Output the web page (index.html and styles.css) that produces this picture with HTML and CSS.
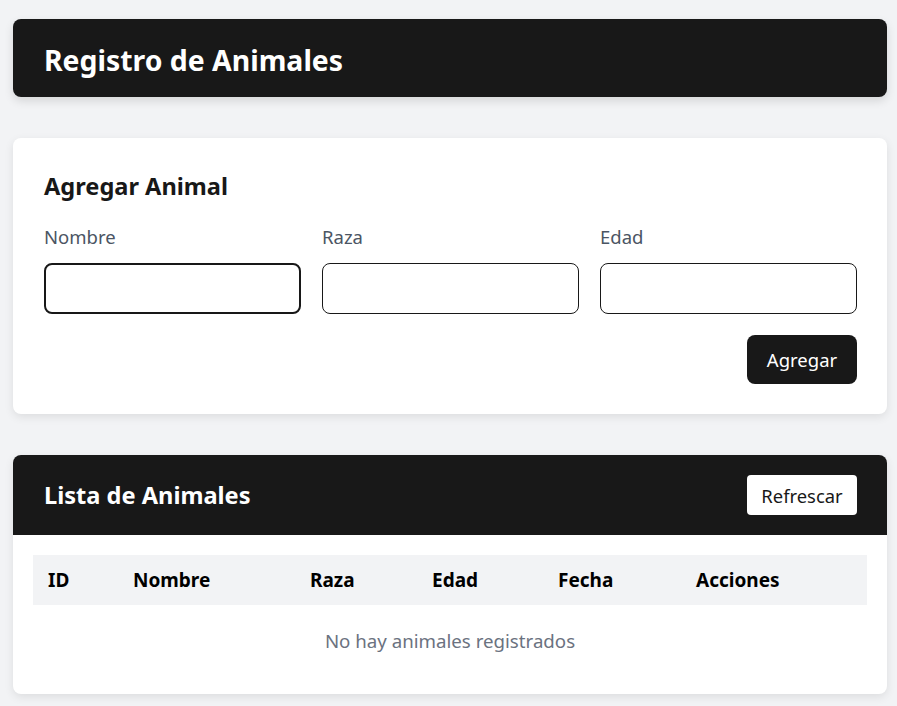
FILE: index.html
```html
<!DOCTYPE html>
<html lang="es">
<head>
<meta charset="utf-8">
<title>Registro de Animales</title>
<link rel="stylesheet" href="styles.css">
</head>
<body>
<div class="page">
  <header class="topbar">
    <h1 class="title">Registro de Animales</h1>
  </header>

  <section class="card form-card">
    <h2 class="card-title">Agregar Animal</h2>
    <div class="fields">
      <label class="field">
        <span class="label">Nombre</span>
        <input class="input input-focus" type="text">
      </label>
      <label class="field">
        <span class="label">Raza</span>
        <input class="input" type="text">
      </label>
      <label class="field">
        <span class="label">Edad</span>
        <input class="input" type="text">
      </label>
    </div>
    <div class="actions">
      <button class="btn-primary" type="button">Agregar</button>
    </div>
  </section>

  <section class="card list-card">
    <div class="list-head">
      <h2 class="card-title light">Lista de Animales</h2>
      <button class="btn-light" type="button">Refrescar</button>
    </div>
    <div class="list-body">
      <table class="table">
        <thead>
          <tr>
            <th class="c-id">ID</th>
            <th class="c-nombre">Nombre</th>
            <th class="c-raza">Raza</th>
            <th class="c-edad">Edad</th>
            <th class="c-fecha">Fecha</th>
            <th class="c-acc">Acciones</th>
          </tr>
        </thead>
        <tbody>
          <tr>
            <td class="empty" colspan="6">No hay animales registrados</td>
          </tr>
        </tbody>
      </table>
    </div>
  </section>
</div>
</body>
</html>
```
FILE: styles.css
```css
* { box-sizing: border-box; }
html, body { margin: 0; padding: 0; }
body {
  background: #f2f3f5;
  font-family: "Segoe UI", "Noto Sans", "Open Sans", sans-serif;
  color: #181818;
}
.page {
  padding: 19px 10px 12px 13px;
  display: flex;
  flex-direction: column;
  gap: 41px;
}
.topbar {
  background: #181818;
  border-radius: 8px;
  height: 78px;
  padding: 4px 31px 0;
  display: flex;
  align-items: center;
  box-shadow: 0 4px 10px rgba(0,0,0,0.12);
}
.title {
  margin: 0;
  color: #fff;
  font-size: 28.4px;
  font-weight: 700;
}
.card {
  background: #fff;
  border-radius: 8px;
  box-shadow: 0 3px 10px rgba(0,0,0,0.09);
  overflow: hidden;
}
.form-card {
  padding: 33px 30px 30px 31px;
}
.card-title {
  margin: 0;
  font-size: 23.6px;
  font-weight: 700;
  line-height: 30px;
  color: #181818;
}
.card-title.light { color: #fff; }
.fields {
  margin-top: 25px;
  display: grid;
  grid-template-columns: 1fr 1fr 1fr;
  gap: 21px;
}
.field {
  display: flex;
  flex-direction: column;
  gap: 15px;
}
.label {
  font-size: 18.5px;
  line-height: 22px;
  color: #4b5563;
}
.input {
  height: 51px;
  border: 1px solid #181818;
  border-radius: 8px;
  background: #fff;
  font: inherit;
  padding: 0 12px;
  outline: none;
}
.input-focus {
  border: 2px solid #181818;
}
.actions {
  margin-top: 21px;
  display: flex;
  justify-content: flex-end;
}
.btn-primary {
  background: #181818;
  color: #fff;
  border: none;
  border-radius: 8px;
  height: 49px;
  width: 110px;
  font-family: inherit;
  font-size: 18.5px;
  cursor: pointer;
}
.list-head {
  background: #181818;
  height: 80px;
  padding: 0 30px 0 31px;
  display: flex;
  align-items: center;
  justify-content: space-between;
}
.btn-light {
  background: #fff;
  color: #181818;
  border: none;
  border-radius: 4px;
  height: 40px;
  width: 110px;
  font-family: inherit;
  font-size: 18.4px;
  cursor: pointer;
}
.list-body {
  padding: 20px 20px 0 20px;
  height: 159px;
}
.table {
  width: 100%;
  border-collapse: collapse;
  table-layout: fixed;
}
.table th {
  background: #f2f3f5;
  height: 50px;
  text-align: left;
  padding: 0 15px;
  font-size: 19px;
  font-weight: 700;
  color: #000;
}
.c-id { width: 85px; }
.c-nombre { width: 177px; }
.c-raza { width: 122px; }
.c-edad { width: 126px; }
.c-fecha { width: 138px; }
.c-acc { width: auto; }
.empty {
  text-align: center;
  color: #6b7280;
  font-size: 18.7px;
  height: 70px;
  padding: 0;
}
```
